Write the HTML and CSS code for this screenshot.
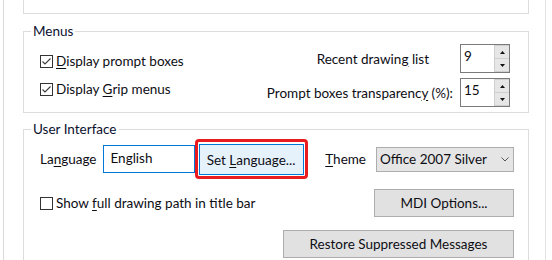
FILE: index.html
```html
<!DOCTYPE html>
<html>
<head>
<meta charset="utf-8">
<link rel="stylesheet" href="styles.css">
</head>
<body>
<div class="frame">
  <div class="top-group"></div>

  <fieldset class="group menus">
    <legend>Menus</legend>
    <div class="menus-body">
      <div class="checks">
        <label class="check-row">
          <span class="cb"><svg width="11" height="11" viewBox="0 0 11 11"><polyline points="1.5,5.5 4,8 9.5,2.5" fill="none" stroke="#3a3a3a" stroke-width="1.1"/></svg></span>
          <span><u>D</u>isplay prompt boxes</span>
        </label>
        <label class="check-row">
          <span class="cb"><svg width="11" height="11" viewBox="0 0 11 11"><polyline points="1.5,5.5 4,8 9.5,2.5" fill="none" stroke="#3a3a3a" stroke-width="1.1"/></svg></span>
          <span>Display <u>G</u>rip menus</span>
        </label>
      </div>
      <div class="spins">
        <span class="lbl lbl-recent">Recent drawin<u>g</u> list</span>
        <div class="spin">
          <span class="val">9</span>
          <span class="arrows">
            <span class="arr"><svg width="5" height="3" viewBox="0 0 5 3"><polygon points="2.5,0 5,3 0,3" fill="#111"/></svg></span>
            <span class="arr"><svg width="5" height="3" viewBox="0 0 5 3"><polygon points="0,0 5,0 2.5,3" fill="#111"/></svg></span>
          </span>
        </div>
        <span class="lbl lbl-prompt">Prompt boxes transparenc<u>y</u> (%):</span>
        <div class="spin">
          <span class="val">15</span>
          <span class="arrows">
            <span class="arr"><svg width="5" height="3" viewBox="0 0 5 3"><polygon points="2.5,0 5,3 0,3" fill="#111"/></svg></span>
            <span class="arr"><svg width="5" height="3" viewBox="0 0 5 3"><polygon points="0,0 5,0 2.5,3" fill="#111"/></svg></span>
          </span>
        </div>
      </div>
    </div>
  </fieldset>

  <fieldset class="group ui">
    <legend>User Interface</legend>
    <div class="ui-body">
      <div class="row row-lang">
        <span class="lang-label">La<u>n</u>guage</span>
        <div class="textbox">English</div>
        <div class="highlight"><button class="btn btn-focus">Set <u>L</u>anguage...</button></div>
        <span class="theme-label"><u>T</u>heme</span>
        <div class="combo">
          <span>Office 2007 Silver</span>
          <svg class="chev" width="8" height="5" viewBox="0 0 8 5"><polyline points="0.5,0.5 4,4 7.5,0.5" fill="none" stroke="#555" stroke-width="1"/></svg>
        </div>
      </div>
      <div class="row row-path">
        <label class="check-row">
          <span class="cb"></span>
          <span>Show <u>f</u>ull drawing path in title bar</span>
        </label>
        <button class="btn btn-mdi">MDI Options...</button>
      </div>
      <div class="row row-restore">
        <button class="btn btn-restore">Restore Suppressed Messages</button>
      </div>
    </div>
  </fieldset>
</div>
</body>
</html>
```
FILE: styles.css
```css
html, body {
  margin: 0;
  padding: 0;
  width: 552px;
  height: 260px;
  overflow: hidden;
  background: #fff;
}

body {
  font-family: Lato, "Liberation Sans", sans-serif;
  font-size: 13.5px;
  color: #0d0d14;
}

u {
  text-decoration: underline;
  text-underline-offset: 2px;
}

.frame {
  margin-left: 3px;
  width: 541px;
  height: 260px;
  overflow: hidden;
  border-left: 1px solid #dadada;
  border-right: 1px solid #e2e2e2;
}

.top-group {
  margin-left: 19px;
  width: 506px;
  height: 14px;
  box-sizing: border-box;
  border: 1px solid #dcdcdc;
  border-top: none;
}

.group {
  margin: 9px 0 0 19px;
  width: 506px;
  box-sizing: border-box;
  padding: 0;
  border: 1px solid #dcdcdc;
  min-inline-size: 0;
}

.group legend {
  margin-left: 7px;
  padding: 0 2px;
  line-height: 17px;
  color: #0a0f2e;
}

.ui {
  margin-top: 8px;
  padding-bottom: 2px;
}

/* Menus */
.menus-body {
  display: flex;
  height: 72px;
}

.checks {
  flex: 1;
  padding: 7px 0 0 16px;
}

.check-row {
  display: flex;
  align-items: center;
  height: 28px;
  gap: 3px;
}

.cb {
  width: 13px;
  height: 13px;
  box-sizing: border-box;
  border: 1px solid #333;
  background: #fff;
  display: flex;
  align-items: center;
  justify-content: center;
  flex: none;
}

.cb svg {
  display: block;
}

.spins {
  display: grid;
  grid-template-columns: auto 50px;
  grid-auto-rows: 29px;
  row-gap: 5px;
  align-items: center;
  justify-items: end;
  padding: 4px 18px 0 0;
}

.lbl-recent {
  margin-right: 31px;
}

.lbl-prompt {
  margin-right: 7px;
}

.spin {
  width: 50px;
  height: 29px;
  box-sizing: border-box;
  border: 1px solid #7a7a7a;
  display: flex;
  background: #fff;
}

.spin .val {
  flex: 1;
  padding: 2px 0 0 3px;
  line-height: 18px;
}

.arrows {
  display: flex;
  flex-direction: column;
  width: 15px;
}

.arr {
  flex: 1;
  display: flex;
  align-items: center;
  justify-content: center;
  background: #e6e6e6;
  border: 1px solid #cfcfcf;
  border-right: none;
}

.arr + .arr {
  border-top: none;
}

.arr svg {
  display: block;
}

/* User interface */
.ui-body {
  padding: 1px 14px 0 16px;
}

.row {
  display: flex;
  align-items: center;
}

.row-lang {
  height: 40px;
}

.lang-label {
  margin-right: 6px;
}

.textbox {
  width: 92px;
  height: 28px;
  box-sizing: border-box;
  border: 1px solid #0078d7;
  padding: 3px 0 0 7px;
  line-height: 18px;
}

.highlight {
  display: flex;
  border: 3px solid #ea1b1e;
  border-radius: 4px;
  padding: 2px 1px 1px 1px;
}

.btn {
  font-family: inherit;
  font-size: 13.5px;
  color: #0d0d14;
  background: #e1e1e1;
  border: 1px solid #adadad;
  border-radius: 0;
  padding: 0;
  height: 28px;
  line-height: 18px;
}

.btn-focus {
  width: 105px;
  height: 31px;
  background: #e5f1fb;
  border-color: #0078d7;
}

.theme-label {
  margin-left: auto;
  margin-right: 10px;
}

.combo {
  width: 138px;
  height: 25px;
  box-sizing: border-box;
  background: #e5e5e5;
  border: 1px solid #adadad;
  display: flex;
  align-items: center;
  justify-content: space-between;
  padding: 0 4px 0 3px;
}

.chev {
  display: block;
}

.row-path {
  margin-top: 10px;
  height: 28px;
  justify-content: space-between;
}

.btn-mdi {
  width: 140px;
}

.row-restore {
  margin-top: 13px;
  justify-content: flex-end;
}

.btn-restore {
  width: 231px;
}
```
